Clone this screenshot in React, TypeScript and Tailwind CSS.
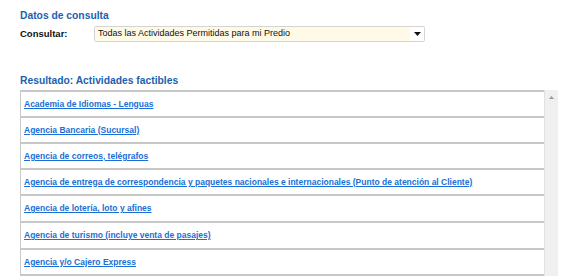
const actividades = [
  { nombre: "Academia de Idiomas - Lenguas", alto: "h-[26px]" },
  { nombre: "Agencia Bancaria (Sucursal)", alto: "h-[26px]" },
  { nombre: "Agencia de correos, telégrafos", alto: "h-[26px]" },
  {
    nombre:
      "Agencia de entrega de correspondencia y paquetes nacionales e internacionales (Punto de atención al Cliente)",
    alto: "h-[26px]",
  },
  { nombre: "Agencia de lotería, loto y afines", alto: "h-[27px]" },
  { nombre: "Agencia de turismo (incluye venta de pasajes)", alto: "h-[27px]" },
  { nombre: "Agencia y/o Cajero Express", alto: "h-[26px]" },
  { nombre: "Alquiler de vehículos", alto: "h-[26px]" },
];

export default function App() {
  return (
    <div className="h-[276px] w-[588px] overflow-hidden bg-white pl-5 pt-[10px] font-['Liberation_Sans',Arial,sans-serif]">
      <h2 className="text-[10.3px] font-bold leading-[12px] text-[#1b62b0]">Datos de consulta</h2>
      <div className="mt-[4px] flex h-[16px] items-center">
        <span className="w-[74px] text-[9.5px] font-bold text-[#111]">Consultar:</span>
        <div className="flex h-[16px] w-[331px] items-center rounded-[2px] border border-[#d4d4d4] bg-white">
          <div className="flex h-full flex-1 items-center bg-[#fffae8] pl-[3px] text-[9px] text-[#111]">
            Todas las Actividades Permitidas para mi Predio
          </div>
          <div className="flex w-[14px] items-center justify-center">
            <svg width="7" height="4" viewBox="0 0 7 4">
              <path d="M0 0h7L3.5 4z" fill="#111" />
            </svg>
          </div>
        </div>
      </div>
      <h2 className="mt-[33px] text-[10.3px] font-bold leading-[12px] text-[#1b62b0]">
        Resultado: Actividades factibles
      </h2>
      <div className="mt-[3px] flex w-[538px]">
        <div className="flex-1 border-l border-t-2 border-[#c8c8c8]">
          {actividades.map((a) => (
            <div key={a.nombre} className={`flex items-center border-b-2 border-[#c8c8c8] pl-[3px] ${a.alto}`}>
              <a href="#" className="text-[8.5px] font-bold text-[#1a6fd6] underline">
                {a.nombre}
              </a>
            </div>
          ))}
        </div>
        <div className="w-[14px] border-l border-[#e2e2e2] bg-[#f0f0f0] pt-[6px]">
          <div className="flex justify-center">
            <svg width="5" height="3" viewBox="0 0 5 3">
              <path d="M2.5 0L5 3H0z" fill="#999" />
            </svg>
          </div>
        </div>
      </div>
    </div>
  );
}
